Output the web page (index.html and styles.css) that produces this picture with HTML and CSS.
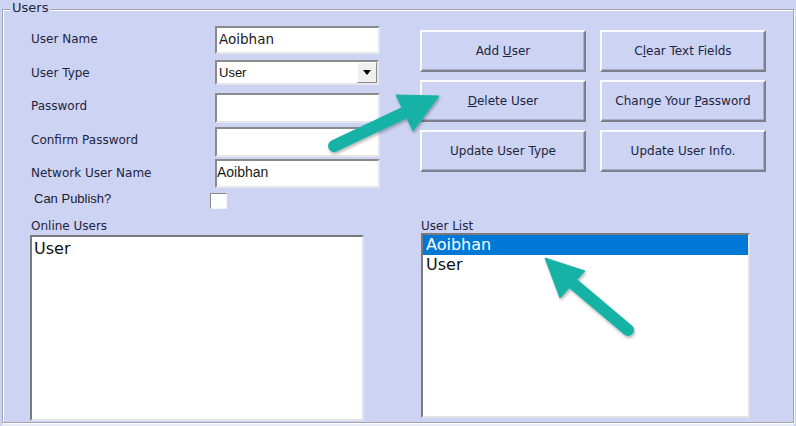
FILE: index.html
```html
<!DOCTYPE html>
<html lang="en">
<head>
    <meta charset="UTF-8">
    <title>Users</title>
    <link rel="stylesheet" href="styles.css">
</head>
<body>

    <div class="group">
        <span class="group__title">Users</span>

        <div class="group__top">
            <div class="form">
                <label class="form__label">User Name</label>
                <div class="field field--name">Aoibhan</div>

                <label class="form__label">User Type</label>
                <div class="combo">
                    <span class="combo__text">User</span>
                    <span class="combo__btn"><span class="combo__arrow"></span></span>
                </div>

                <label class="form__label">Password</label>
                <div class="field field--tall"></div>

                <label class="form__label">Confirm Password</label>
                <div class="field field--tall"></div>

                <label class="form__label form__label--low">Network User Name</label>
                <div class="field field--network">Aoibhan</div>

                <label class="form__label form__label--check">Can Publish?</label>
                <div class="check"></div>
            </div>

            <div class="actions">
                <button class="btn" type="button">Add <u>U</u>ser</button>
                <button class="btn" type="button">C<u>l</u>ear Text Fields</button>
                <button class="btn" type="button"><u>D</u>elete User</button>
                <button class="btn" type="button">Change Your <u>P</u>assword</button>
                <button class="btn" type="button">Update User Type</button>
                <button class="btn" type="button">Update User Info.</button>
            </div>
        </div>

        <div class="group__lists">
            <div class="list-col list-col--online">
                <div class="list-col__label">Online Users</div>
                <div class="listbox listbox--online">
                    <div class="listbox__item">User</div>
                </div>
            </div>
            <div class="list-col list-col--users">
                <div class="list-col__label">User List</div>
                <div class="listbox listbox--users">
                    <div class="listbox__item is-selected">Aoibhan</div>
                    <div class="listbox__item">User</div>
                </div>
            </div>
        </div>
    </div>

    <!-- callout arrows drawn over the form -->
    <svg class="callouts" width="796" height="426" viewBox="0 0 796 426">
        <defs>
            <filter id="shadow" x="-20%" y="-20%" width="140%" height="140%">
                <feDropShadow dx="1" dy="2" stdDeviation="1.5" flood-color="#000" flood-opacity="0.3"/>
            </filter>
        </defs>
        <g fill="#19b2a5" stroke="#19b2a5" filter="url(#shadow)">
            <line x1="334" y1="146" x2="408" y2="111" stroke-width="12" stroke-linecap="round"/>
            <polygon points="439,96 396,95 413,131" stroke-width="1" stroke-linejoin="round"/>
            <line x1="628" y1="330" x2="570" y2="281" stroke-width="12" stroke-linecap="round"/>
            <polygon points="545,258 585,271 560,298" stroke-width="1" stroke-linejoin="round"/>
        </g>
    </svg>

</body>
</html>
```

FILE: styles.css
```css
/* Page */
body {
    margin: 0;
    width: 796px;
    height: 426px;
    overflow: hidden;
    position: relative;
    background: #cdd3f3;
    font-family: "DejaVu Sans", sans-serif;
    color: #1c2540;
}

/* Group box */
.group {
    box-sizing: border-box;
    position: relative;
    width: 792px;
    height: 414px;
    margin: 9px 0 0 2px;
    padding: 16px 0 0 27px;
    border: 1px solid #a2a4b4;
    box-shadow: inset 1px 1px 0 #fff, 1px 1px 0 #fff, 0 5px 0 #e9ebf6;
}

.group__title {
    position: absolute;
    top: -10px;
    left: 7px;
    padding: 0 2px;
    background: #cdd3f3;
    font-size: 13px;
    line-height: 16px;
}

.group__top {
    display: flex;
    gap: 40px;
}

/* Form */
.form {
    display: grid;
    width: 350px;
    grid-template-columns: 185px 165px;
    grid-template-rows: 34px 33px 34px 32px 34px 16px;
    align-items: start;
}

.form__label {
    padding: 6px 0 0 1px;
    font-size: 12px;
    line-height: 14px;
}

.form__label--low {
    padding-top: 7px;
}

.form__label--check {
    padding: 0 0 0 4px;
    margin-top: -2px;
    font-family: "Liberation Sans", sans-serif;
    font-size: 13px;
    line-height: 16px;
    color: #1a1a2a;
}

/* Sunken controls */
.field,
.combo,
.check {
    box-sizing: border-box;
    background: #fff;
    border: 2px solid;
    border-color: #8a8a8a #e6e6ea #e6e6ea #8a8a8a;
}

.field {
    height: 30px;
    padding-left: 2px;
    color: #1a1a1a;
}

.field--name {
    height: 28px;
    font-size: 13.5px;
    line-height: 23px;
}

.field--network {
    height: 29px;
    padding-left: 0;
    font-family: "Liberation Sans", sans-serif;
    font-size: 14px;
    line-height: 22px;
}

.combo {
    display: flex;
    align-items: center;
    justify-content: space-between;
    width: 164px;
    height: 25px;
    padding-left: 2px;
}

.combo__text {
    font-family: "Liberation Sans", sans-serif;
    font-size: 13px;
    color: #111;
}

.combo__btn {
    box-sizing: border-box;
    display: flex;
    align-items: center;
    justify-content: center;
    width: 20px;
    height: 21px;
    background: #f0f0f0;
    border: 1px solid;
    border-color: #fff #8c8c8c #8c8c8c #fff;
}

.combo__arrow {
    width: 0;
    height: 0;
    border-left: 4px solid transparent;
    border-right: 4px solid transparent;
    border-top: 5px solid #000;
}

.check {
    width: 17px;
    height: 16px;
    margin-left: -5px;
    border-width: 1px;
    border-color: #8a8a8a #f4f4f4 #f4f4f4 #8a8a8a;
}

/* Buttons */
.actions {
    display: grid;
    grid-template-columns: 166px 166px;
    grid-auto-rows: 42px;
    column-gap: 14px;
    row-gap: 8px;
    margin-top: 4px;
    align-self: flex-start;
}

.btn {
    box-sizing: border-box;
    padding: 0;
    background: #cdd3f3;
    border: 2px solid;
    border-color: #fbfbff #7d7f8c #7d7f8c #fbfbff;
    box-shadow: inset -1px -1px 0 #a9aec8;
    font-family: "DejaVu Sans", sans-serif;
    font-size: 12px;
    color: #1c2540;
}

/* Lists */
.group__lists {
    display: flex;
    margin-top: 10px;
}

.list-col--online {
    width: 390px;
}

.list-col--users {
    padding-left: 1px;
}

.list-col__label {
    font-size: 12px;
    line-height: 14px;
}

.list-col--online .list-col__label {
    padding-left: 1px;
}

.listbox {
    box-sizing: border-box;
    background: #fff;
    border: 2px solid;
    border-color: #7a7a7a #e2e2e6 #e2e2e6 #7a7a7a;
    font-size: 16px;
    color: #111;
}

.listbox--online {
    width: 334px;
    height: 186px;
    margin-top: 2px;
    padding-top: 2px;
}

.listbox--users {
    width: 329px;
    height: 185px;
}

.listbox__item {
    height: 20px;
    line-height: 20px;
    padding-left: 2px;
}

.listbox--users .listbox__item {
    padding-left: 3px;
}

.listbox__item.is-selected {
    background: #0078d7;
    color: #fff;
}

/* Callout arrows */
.callouts {
    position: absolute;
    top: 0;
    left: 0;
    pointer-events: none;
}
```
